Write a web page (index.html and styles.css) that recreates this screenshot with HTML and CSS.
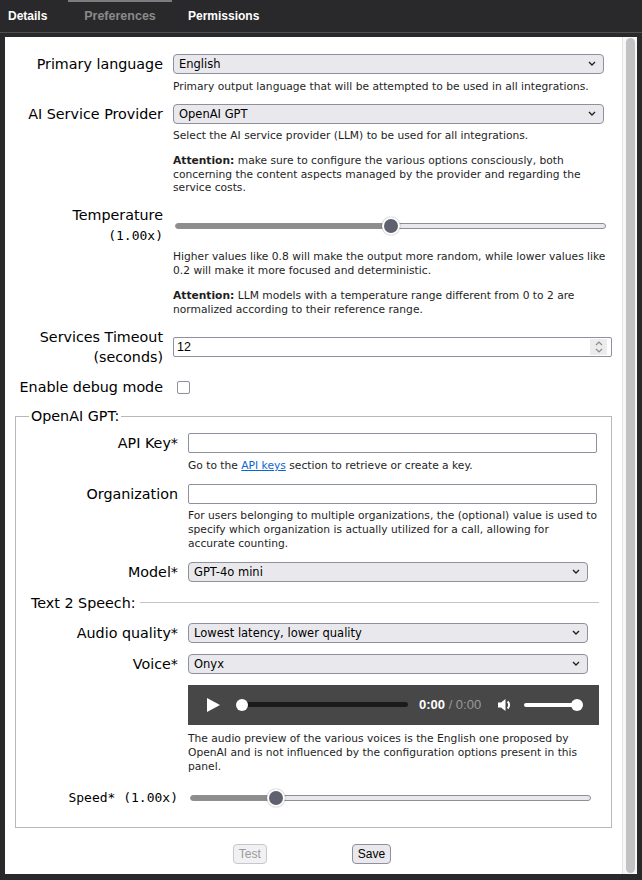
FILE: index.html
```html
<!DOCTYPE html>
<html lang="en">
<head>
<meta charset="utf-8">
<title>Preferences</title>
<link rel="stylesheet" href="styles.css">
</head>
<body>
<header class="tabs">
  <div class="tab tab-first">Details</div>
  <div class="tab tab-active">Preferences</div>
  <div class="tab tab-last">Permissions</div>
</header>
<div class="frame">
  <main class="panel">
    <div class="field">
      <label class="label">Primary language</label>
      <div class="select-wrap w-top">
        <select><option>English</option></select>
        <svg class="chev" viewBox="0 0 8 5"><path d="M1 1l3 3 3-3" /></svg>
      </div>
      <p class="help">Primary output language that will be attempted to be used in all integrations.</p>
    </div>
    <div class="field">
      <label class="label">AI Service Provider</label>
      <div class="select-wrap w-top">
        <select><option>OpenAI GPT</option></select>
        <svg class="chev" viewBox="0 0 8 5"><path d="M1 1l3 3 3-3" /></svg>
      </div>
      <p class="help">Select the AI service provider (LLM) to be used for all integrations.</p>
      <p class="help help-more"><b>Attention:</b> make sure to configure the various options consciously, both concerning the content aspects managed by the provider and regarding the service costs.</p>
    </div>
    <div class="field">
      <label class="label">Temperature<br><span class="mono">(1.00x)</span></label>
      <div class="range range-top" style="--p:0.5">
        <div class="range-track"></div>
        <div class="range-thumb"></div>
      </div>
      <p class="help help-tall">Higher values like 0.8 will make the output more random, while lower values like 0.2 will make it more focused and deterministic.</p>
      <p class="help help-more"><b>Attention:</b> LLM models with a temperature range different from 0 to 2 are normalized according to their reference range.</p>
    </div>
    <div class="field">
      <label class="label">Services Timeout<br>(seconds)</label>
      <div class="number-wrap">
        <input class="number" type="number" value="12">
        <span class="spin">
          <svg viewBox="0 0 10 14"><path d="M2 5l3-3 3 3M2 9l3 3 3-3" /></svg>
        </span>
      </div>
    </div>
    <div class="field field-debug">
      <label class="label">Enable debug mode</label>
      <div><span class="checkbox"></span></div>
    </div>

    <fieldset class="group">
      <legend>OpenAI GPT:</legend>
      <div class="field field-in">
        <label class="label">API Key*</label>
        <input class="text w-text" type="text">
        <p class="help">Go to the <a href="#">API keys</a> section to retrieve or create a key.</p>
      </div>
      <div class="field field-in">
        <label class="label">Organization</label>
        <input class="text w-text" type="text">
        <p class="help">For users belonging to multiple organizations, the (optional) value is used to specify which organization is actually utilized for a call, allowing for<br>accurate counting.</p>
      </div>
      <div class="field field-in">
        <label class="label">Model*</label>
        <div class="select-wrap w-in">
          <select><option>GPT-4o mini</option></select>
          <svg class="chev" viewBox="0 0 8 5"><path d="M1 1l3 3 3-3" /></svg>
        </div>
      </div>
      <div class="subhead"><span>Text 2 Speech:</span><span class="rule"></span></div>
      <div class="field field-in">
        <label class="label">Audio quality*</label>
        <div class="select-wrap w-in">
          <select><option>Lowest latency, lower quality</option></select>
          <svg class="chev" viewBox="0 0 8 5"><path d="M1 1l3 3 3-3" /></svg>
        </div>
      </div>
      <div class="field field-in field-voice">
        <label class="label">Voice*</label>
        <div class="select-wrap w-in">
          <select><option>Onyx</option></select>
          <svg class="chev" viewBox="0 0 8 5"><path d="M1 1l3 3 3-3" /></svg>
        </div>
      </div>
      <div class="field field-in field-audio">
        <div class="audio">
          <svg class="play" viewBox="0 0 13 14"><path d="M0 0L13 7L0 14Z" /></svg>
          <div class="progress">
            <div class="progress-track"></div>
            <span class="knob"></span>
          </div>
          <div class="time"><b>0:00</b> / 0:00</div>
          <svg class="vol" viewBox="0 0 16 16"><path class="spk" d="M1 5.5h3L8.5 2v12L4 10.5H1z" /><path class="wave" d="M10.6 4.6a4.6 4.6 0 0 1 0 6.8" /></svg>
          <div class="volume">
            <div class="volume-track"></div>
            <span class="knob"></span>
          </div>
        </div>
        <p class="help">The audio preview of the various voices is the English one proposed by OpenAI and is not influenced by the configuration options present in this panel.</p>
      </div>
      <div class="field field-in field-speed">
        <label class="label mono">Speed* (1.00x)</label>
        <div class="range range-in" style="--p:0.2">
          <div class="range-track"></div>
          <div class="range-thumb"></div>
        </div>
      </div>
    </fieldset>

    <div class="actions">
      <button class="btn" disabled>Test</button>
      <button class="btn">Save</button>
    </div>
  </main>
  <div class="scrollbar"><div class="scroll-thumb"></div></div>
</div>
</body>
</html>
```

FILE: styles.css
```css
* { box-sizing: border-box; }
html, body { margin: 0; padding: 0; }
body {
  width: 642px;
  height: 880px;
  overflow: hidden;
  background: #29292b;
  font-family: "DejaVu Sans", Verdana, sans-serif;
  color: #000;
}

/* tabs */
.tabs {
  height: 33px;
  border-bottom: 1px solid #4f4f51;
  display: flex;
  align-items: stretch;
  font-family: "Liberation Sans", Arial, sans-serif;
  font-weight: bold;
  font-size: 12px;
  color: #fff;
}
.tab { display: flex; align-items: center; position: relative; }
.tab-first { padding: 0 0 0 8px; width: 68px; }
.tab-active { width: 104px; justify-content: center; color: #8a8a8a; font-size: 12.5px; }
.tab-active::before {
  content: "";
  position: absolute;
  left: 0; right: 0; top: 0;
  height: 2px;
  background: #7c7c7e;
}
.tab-last { padding-left: 16px; }

/* frame + panel */
.frame {
  display: flex;
  height: 837px;
  margin: 4px 5px 0 5px;
}
.panel {
  flex: 1;
  background: #fff;
  padding-top: 17px;
  overflow: hidden;
}
.scrollbar {
  width: 15px;
  background: #f7f7f7;
  border-left: 1px solid #e4e4e4;
  padding: 1px 2px 1px 3px;
}
.scroll-thumb {
  height: 100%;
  background: #c2c2c2;
  border-radius: 5px;
}

/* fields */
.field {
  display: grid;
  grid-template-columns: 158px 439px;
  column-gap: 10px;
  align-items: center;
  margin-bottom: 10.5px;
}
.label {
  grid-column: 1;
  text-align: right;
  font-size: 14.3px;
  line-height: 20px;
  color: #000;
}
.mono { font-family: "DejaVu Sans Mono", Menlo, monospace; font-size: 13px; }
.label.mono { font-size: 13px; }
.help {
  grid-column: 2;
  margin: 5.5px 0 0;
  font-size: 10.7px;
  line-height: 13.6px;
  color: #1e1e1e;
}
.help-tall { margin-top: 4px; }
.help.help-more { margin-top: 11.5px; }
.help b { font-weight: bold; }
.help a { color: #0b67d0; text-decoration: underline; }

/* select */
.select-wrap { position: relative; grid-column: 2; }
.w-top { width: 431px; }
.w-in { width: 400px; }
.select-wrap select {
  appearance: none;
  -webkit-appearance: none;
  display: block;
  width: 100%;
  height: 20px;
  margin: 0;
  padding: 0 0 0 5px;
  border: 1px solid #8f8f9d;
  border-radius: 4px;
  background: #e9e9ed;
  font-family: "DejaVu Sans", Verdana, sans-serif;
  font-size: 11.5px;
  color: #000;
}
.chev {
  position: absolute;
  right: 8px;
  top: 7px;
  width: 8px;
  height: 5px;
  fill: none;
  stroke: #222;
  stroke-width: 1.4;
  pointer-events: none;
}

/* range */
.range {
  position: relative;
  height: 20px;
  display: flex;
  align-items: center;
  grid-column: 2;
  margin-left: 2px;
}
.range-top { width: 431px; }
.range-in { width: 401px; }
.range-track {
  flex: 1;
  height: 6px;
  border: 1px solid #8f8f8f;
  border-radius: 3px;
  background: linear-gradient(to right, #8d8d8d calc(9px + (100% - 18px) * var(--p)), #e9e9ed calc(9px + (100% - 18px) * var(--p)));
}
.range-thumb {
  position: absolute;
  top: 1px;
  left: calc((100% - 18px) * var(--p));
  width: 18px;
  height: 18px;
  border-radius: 50%;
  background: #60616f;
  border: 2px solid #fff;
  box-shadow: 0 0 1.5px rgba(0,0,0,0.45);
}

/* number */
.number-wrap { position: relative; grid-column: 2; width: 439px; }
.number {
  display: block;
  width: 100%;
  height: 20px;
  margin: 0;
  padding: 0 0 0 3px;
  border: 1px solid #8f8f9d;
  border-radius: 2px;
  font-family: "Liberation Sans", Arial, sans-serif;
  font-size: 12.5px;
  color: #000;
  background: #fff;
  -moz-appearance: textfield;
}
.number::-webkit-inner-spin-button,
.number::-webkit-outer-spin-button { -webkit-appearance: none; margin: 0; }
.spin {
  position: absolute;
  right: 5px;
  top: 2px;
  width: 17px;
  height: 16px;
  background: #ececec;
  display: flex;
  align-items: center;
  justify-content: center;
}
.spin svg { width: 10px; height: 14px; fill: none; stroke: #8b8b8b; stroke-width: 1.2; }

/* checkbox */
.checkbox {
  display: block;
  width: 13px;
  height: 13px;
  margin-left: 4px;
  border: 1.5px solid #8f8f9d;
  border-radius: 2px;
  background: #fff;
}
.field-debug { margin-bottom: 9px; }

/* fieldset */
.group {
  margin: 0 0 0 10px;
  width: 597px;
  border: 1px solid #b8b8b8;
  padding: 7px 0 9px 0;
  min-width: 0;
}
.group legend {
  font-size: 14.3px;
  line-height: 20px;
  padding: 0 2px;
  margin-left: 13px;
}
.field-in { grid-template-columns: 162px 411px; margin-bottom: 11px; }
.group .help { line-height: 14px; }
.text {
  grid-column: 2;
  display: block;
  height: 20px;
  margin: 0;
  border: 1px solid #8f8f9d;
  border-radius: 2px;
  background: #fff;
}
.w-text { width: 409px; }
.subhead {
  display: flex;
  align-items: center;
  height: 20px;
  margin: 0 12px 10px 15px;
  font-size: 14.3px;
  line-height: 20px;
}
.subhead .rule {
  flex: 1;
  height: 1px;
  margin-left: 4px;
  margin-top: -2px;
  background: #c4c4c4;
}
.field-voice { margin-bottom: 10.5px; }
.field-audio { margin-bottom: 14px; }
.field-audio .help { margin-top: 7.5px; }
.field-speed { margin-bottom: 10px; }

/* audio player */
.audio {
  grid-column: 2;
  width: 411px;
  height: 40px;
  background: #474747;
  display: flex;
  align-items: center;
  padding-left: 19px;
  font-family: "Liberation Sans", Arial, sans-serif;
  font-size: 13px;
}
.play { width: 13px; height: 14px; fill: #fff; }
.progress {
  position: relative;
  margin-left: 16px;
  width: 172px;
  height: 12px;
  display: flex;
  align-items: center;
}
.progress-track {
  margin-left: 6px;
  flex: 1;
  height: 5px;
  border-radius: 2.5px;
  background: #1b1b1b;
}
.knob {
  position: absolute;
  top: 0;
  width: 12px;
  height: 12px;
  border-radius: 50%;
  background: #fff;
}
.progress .knob { left: 0; }
.time { margin-left: 11px; color: #9a9a9a; white-space: nowrap; }
.time b { color: #fff; }
.vol { margin-left: 16px; width: 16px; height: 16px; }
.vol .spk { fill: #fff; }
.vol .wave { fill: none; stroke: #fff; stroke-width: 2; }
.volume {
  position: relative;
  margin-left: 11px;
  width: 59px;
  height: 12px;
  display: flex;
  align-items: center;
}
.volume-track {
  width: 54px;
  height: 4px;
  border-radius: 2px;
  background: #fff;
}
.volume .knob { right: 0; }

/* actions */
.actions {
  display: flex;
  justify-content: center;
  gap: 85px;
  margin-top: 16px;
  padding-right: 3px;
}
.btn {
  height: 20px;
  padding: 0 5px;
  border: 1px solid #8f8f9d;
  border-radius: 4px;
  background: #e9e9ed;
  font-family: "Liberation Sans", Arial, sans-serif;
  font-size: 12px;
  color: #000;
}
.btn:disabled {
  color: #9a9a9a;
  border-color: #c8c8cc;
  background: #f1f1f3;
}
```
